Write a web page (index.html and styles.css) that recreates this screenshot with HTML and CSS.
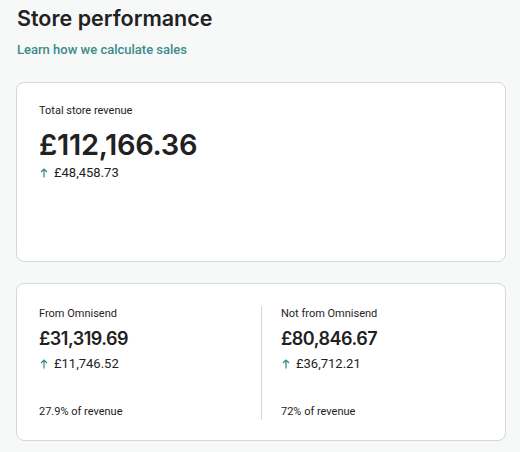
FILE: index.html
```html
<!DOCTYPE html>
<html>
<head>
<meta charset="utf-8">
<link rel="stylesheet" href="styles.css">
</head>
<body>
<div class="page">
  <h1 class="title">Store performance</h1>
  <a class="learn" href="#">Learn how we calculate sales</a>
  <section class="card card-total">
    <div class="label">Total store revenue</div>
    <div class="big">£112,166.36</div>
    <div class="delta"><svg class="arrow" viewBox="0 0 8 10" width="8" height="10"><path d="M4 9.5V1M1 4L4 1L7 4" fill="none" stroke="#2f8a83" stroke-width="1.2"/></svg>£48,458.73</div>
  </section>
  <section class="card card-split">
    <div class="col">
      <div class="label">From Omnisend</div>
      <div class="mid">£31,319.69</div>
      <div class="delta"><svg class="arrow" viewBox="0 0 8 10" width="8" height="10"><path d="M4 9.5V1M1 4L4 1L7 4" fill="none" stroke="#2f8a83" stroke-width="1.2"/></svg>£11,746.52</div>
      <div class="share">27.9% of revenue</div>
    </div>
    <div class="col col-right">
      <div class="label">Not from Omnisend</div>
      <div class="mid">£80,846.67</div>
      <div class="delta"><svg class="arrow" viewBox="0 0 8 10" width="8" height="10"><path d="M4 9.5V1M1 4L4 1L7 4" fill="none" stroke="#2f8a83" stroke-width="1.2"/></svg>£36,712.21</div>
      <div class="share">72% of revenue</div>
    </div>
  </section>
</div>
</body>
</html>
```
FILE: styles.css
```css
html, body {
  margin: 0;
  padding: 0;
  background: #f7f8f8;
}
body {
  font-family: Roboto, "Liberation Sans", sans-serif;
  color: #1f2223;
}
.page {
  padding: 4px 14px 0 16px;
  display: flex;
  flex-direction: column;
}
.title {
  margin: 0 0 0 1px;
  font-family: Inter, "Noto Sans", sans-serif;
  font-weight: 600;
  font-size: 21.5px;
  line-height: 28px;
  color: #1f2223;
}
.learn {
  margin: 9px 0 0 1px;
  font-size: 13px;
  line-height: 18px;
  font-weight: 500;
  color: #3a8b8c;
  text-decoration: none;
}
.card {
  background: #fff;
  border: 1px solid #d3d8d8;
  border-radius: 8px;
  box-sizing: border-box;
}
.card-total {
  margin-top: 23px;
  height: 180px;
  padding: 20px 22px;
}
.label {
  font-size: 11px;
  line-height: 16px;
  color: #1f2223;
}
.big {
  margin-top: 8px;
  font-family: Inter, "Noto Sans", sans-serif;
  font-weight: 600;
  font-size: 29px;
  line-height: 36px;
  letter-spacing: -0.3px;
}
.delta {
  margin-top: 1px;
  font-size: 13px;
  line-height: 18px;
  display: flex;
  align-items: center;
}
.arrow {
  display: block;
  margin: 0 6px 0 1px;
  flex: none;
}
.card-split {
  margin-top: 21px;
  height: 158px;
  padding: 22px 22px 20px;
  display: grid;
  grid-template-columns: 1fr 1fr;
}
.col {
  display: flex;
  flex-direction: column;
}
.col-right {
  border-left: 1px solid #d3d8d8;
  padding-left: 19px;
}
.mid {
  margin-top: 5px;
  font-family: Inter, "Noto Sans", sans-serif;
  font-weight: 600;
  font-size: 18px;
  line-height: 24px;
  letter-spacing: -0.5px;
}
.card-split .delta {
  margin-top: 4px;
}
.share {
  margin-top: auto;
  font-size: 11px;
  line-height: 16px;
}
```
